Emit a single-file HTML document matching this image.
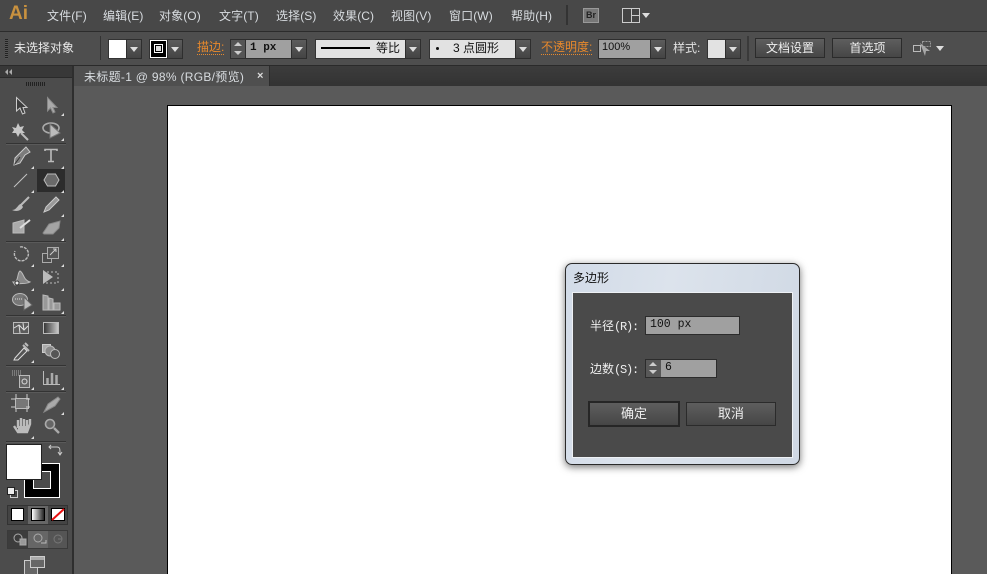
<!DOCTYPE html>
<html style="overflow:hidden;width:987px;height:574px"><head><meta charset="utf-8">
<style>
html,body{margin:0;padding:0}
body{width:987px;height:574px;overflow:hidden;position:relative;background:#5a5a5a;font-family:"Liberation Sans","WenQuanYi Zen Hei","Noto Sans CJK SC",sans-serif;font-size:12px;color:#e6e6e6}
#r{position:absolute;left:0;top:0;width:987px;height:574px;overflow:hidden}
.a{position:absolute;box-sizing:border-box}
.t{position:absolute;white-space:nowrap;line-height:14px;font-size:12px}
.m{color:#d8dce0;top:9px;letter-spacing:.1px}
.dd{position:absolute;box-sizing:border-box;height:20px;width:16px;border:1px solid #2e2e2e;background:linear-gradient(#5c5c5c,#444)}
.dd:after{content:"";position:absolute;left:3px;top:7px;border-left:4px solid transparent;border-right:4px solid transparent;border-top:5px solid #ddd}
.btn{position:absolute;box-sizing:border-box;border:1px solid #2b2b2b;background:linear-gradient(#5e5e5e,#464646);text-align:center;color:#eee;font-size:12px}
.sep{position:absolute;height:1px;background:#333;left:6px;width:60px;box-sizing:content-box;border-bottom:1px solid #5a5a5a}
.mono{font-family:"Liberation Mono","WenQuanYi Zen Hei",monospace;color:#111}
.l{font-family:"Liberation Mono",monospace;font-size:12px;letter-spacing:-1.2px}
</style></head><body><div id="r">

<!-- menu bar -->
<div class="a" style="left:0;top:0;width:987px;height:32px;background:#484848;border-bottom:1px solid #2c2c2c"></div>
<div class="t" style="left:9px;top:2px;font-size:19px;line-height:24px;font-weight:bold;color:#c8913f">Ai</div>
<div class="t m" style="left:47px">文件(F)</div>
<div class="t m" style="left:103px">编辑(E)</div>
<div class="t m" style="left:159px">对象(O)</div>
<div class="t m" style="left:219px">文字(T)</div>
<div class="t m" style="left:276px">选择(S)</div>
<div class="t m" style="left:333px">效果(C)</div>
<div class="t m" style="left:391px">视图(V)</div>
<div class="t m" style="left:449px">窗口(W)</div>
<div class="t m" style="left:511px">帮助(H)</div>
<div class="a" style="left:566px;top:5px;width:2px;height:20px;background:#333"></div>
<div class="a" style="left:583px;top:8px;width:16px;height:15px;background:#777;border:1px solid #999;color:#222;font-size:9px;font-weight:bold;line-height:13px;text-align:center">Br</div>
<div class="a" style="left:622px;top:8px;width:18px;height:15px;border:1px solid #ccc;background:#444"></div>
<div class="a" style="left:631px;top:8px;width:1px;height:15px;background:#ccc"></div>
<div class="a" style="left:631px;top:15px;width:9px;height:1px;background:#ccc"></div>
<div class="a" style="left:642px;top:13px;border-left:4px solid transparent;border-right:4px solid transparent;border-top:5px solid #ddd"></div>

<!-- control bar -->
<div class="a" style="left:0;top:32px;width:987px;height:34px;background:#4e4e4e;border-bottom:1px solid #2a2a2a"></div>
<div class="a" style="left:5px;top:39px;width:3px;height:20px;background:repeating-linear-gradient(#222 0 1px,#555 1px 2px)"></div>
<div class="t" style="left:14px;top:41px;color:#e8e8e8">未选择对象</div>
<div class="a" style="left:100px;top:36px;width:1px;height:24px;background:#333"></div>
<div class="a" style="left:108px;top:39px;width:19px;height:20px;background:#fff;border:1px solid #333"></div>
<div class="dd" style="left:126px;top:39px"></div>
<div class="a" style="left:149px;top:39px;width:19px;height:20px;background:#000;border:1px solid #fff;outline:1px solid #333;outline-offset:-1px"></div>
<div class="a" style="left:150px;top:40px;width:17px;height:18px;background:#000;border:1px solid #fff"></div>
<div class="a" style="left:154px;top:44px;width:9px;height:9px;border:1px solid #fff;background:#000"></div>
<div class="a" style="left:156px;top:46px;width:5px;height:5px;background:#ddd"></div>
<div class="dd" style="left:167px;top:39px"></div>
<div class="t" style="left:197px;top:41px;color:#e8892c;border-bottom:1px dotted #e8892c;line-height:13px">描边:</div>
<div class="a" style="left:230px;top:39px;width:16px;height:20px;background:#555;border:1px solid #2e2e2e"></div>
<div class="a" style="left:234px;top:42px;border-left:4px solid transparent;border-right:4px solid transparent;border-bottom:4px solid #ccc"></div>
<div class="a" style="left:234px;top:51px;border-left:4px solid transparent;border-right:4px solid transparent;border-top:4px solid #ccc"></div>
<div class="a" style="left:246px;top:39px;width:46px;height:20px;background:#a0a0a0;border-top:1px solid #2e2e2e;border-bottom:1px solid #2e2e2e"></div>
<div class="t mono" style="left:250px;top:41px;font-size:11px;font-weight:bold">1 px</div>
<div class="dd" style="left:291px;top:39px"></div>
<div class="a" style="left:315px;top:39px;width:91px;height:20px;background:#e2e2e2;border:1px solid #333"></div>
<div class="a" style="left:321px;top:47px;width:49px;height:2px;background:#000"></div>
<div class="t" style="left:376px;top:41px;color:#111">等比</div>
<div class="dd" style="left:405px;top:39px"></div>
<div class="a" style="left:429px;top:39px;width:87px;height:20px;background:#e2e2e2;border:1px solid #333"></div>
<div class="a" style="left:436px;top:47px;width:3px;height:3px;border-radius:50%;background:#111"></div>
<div class="t" style="left:453px;top:41px;color:#111">3</div>
<div class="t" style="left:463px;top:41px;color:#111">点圆形</div>
<div class="dd" style="left:515px;top:39px"></div>
<div class="t" style="left:541px;top:41px;color:#e8892c;border-bottom:1px dotted #e8892c;line-height:13px">不透明度:</div>
<div class="a" style="left:598px;top:39px;width:54px;height:20px;background:#a0a0a0;border:1px solid #2e2e2e"></div>
<div class="t" style="left:602px;top:40px;color:#111;font-size:11px">100%</div>
<div class="dd" style="left:650px;top:39px"></div>
<div class="t" style="left:673px;top:41px;color:#e0e0e0">样式:</div>
<div class="a" style="left:707px;top:39px;width:19px;height:20px;background:#e2e2e2;border:1px solid #333"></div>
<div class="dd" style="left:725px;top:39px"></div>
<div class="a" style="left:747px;top:36px;width:2px;height:25px;background:#3a3a3a"></div>
<div class="btn" style="left:755px;top:38px;width:70px;height:20px;line-height:18px">文档设置</div>
<div class="btn" style="left:832px;top:38px;width:70px;height:20px;line-height:18px;padding-left:1px">首选项</div>
<svg class="a" style="left:912px;top:40px" width="22" height="18" viewBox="0 0 22 18" fill="none"><rect x="1.5" y="5.5" width="7" height="6" stroke="#bbb"/><rect x="10.5" y="1.5" width="8" height="5" stroke="#999" stroke-dasharray="2 1"/><path d="M8 3 L18 11 L14 11 L13 16 Z" fill="#a8a8a8"/></svg>
<div class="a" style="left:936px;top:46px;border-left:4px solid transparent;border-right:4px solid transparent;border-top:5px solid #ddd"></div>

<!-- tab bar -->
<div class="a" style="left:73px;top:66px;width:914px;height:20px;background:linear-gradient(#3c3c3c,#333)"></div>
<div class="a" style="left:74px;top:66px;width:196px;height:20px;background:#4f4f4f;border-right:1px solid #2d2d2d"></div>
<div class="t" style="left:84px;top:70px;color:#d8dce0;letter-spacing:.3px">未标题-1 @ 98% (RGB/预览)</div>
<div class="t" style="left:257px;top:69px;color:#ddd;font-size:11px;font-weight:bold">×</div>

<!-- artboard -->
<div class="a" style="left:167px;top:105px;width:785px;height:480px;background:#fff;border:1px solid #000"></div>

<!-- toolbox -->
<div class="a" style="left:0;top:66px;width:72px;height:508px;background:#4c4c4c"></div>
<div class="a" style="left:72px;top:66px;width:2px;height:508px;background:#2e2e2e"></div>
<div class="a" style="left:0;top:66px;width:72px;height:12px;background:#383838;border-bottom:1px solid #2a2a2a"></div>
<div class="a" style="left:5px;top:69px;border-top:3px solid transparent;border-bottom:3px solid transparent;border-right:3px solid #aaa"></div>
<div class="a" style="left:9px;top:69px;border-top:3px solid transparent;border-bottom:3px solid transparent;border-right:3px solid #aaa"></div>
<div class="a" style="left:26px;top:82px;width:19px;height:4px;background:repeating-linear-gradient(90deg,#222 0 1px,#4c4c4c 1px 2px)"></div>

<div class="sep" style="top:143px"></div>
<div class="sep" style="top:241px"></div>
<div class="sep" style="top:315px"></div>
<div class="sep" style="top:365px"></div>
<div class="sep" style="top:391px"></div>
<div class="sep" style="top:441px"></div>

<svg class="a" style="left:0;top:90px" width="72" height="380" viewBox="0 90 72 380" fill="none" stroke="#bdbdbd">
<!-- selection -->
<path d="M16.5 97.5 V111 L20 108 L22.5 114 L25 113 L23 107.5 L27 107.5 Z" fill="#3c3c3c" stroke="#ccc"/>
<path d="M47.5 97.5 V111 L50.5 108 L53 113 L55 112 L53 107.5 L57 107.5 Z" fill="#aaa" stroke="#888"/>
<!-- wand -->
<path d="M12 127 L16 128 L18 123 L20 127 L24 126 L22 130 L25 133 L20 133 L18 137 L16 133 L12 133 L14 130 Z" fill="#c8c8c8" stroke="none"/>
<path d="M21 133 L28 140" stroke="#bbb" stroke-width="2"/>
<ellipse cx="51" cy="128" rx="8" ry="5" stroke-width="1.6" stroke="#aaa"/>
<path d="M50 124 V138 L60 133 Z" fill="#bbb" stroke="#777"/>
<!-- pen, type -->
<path d="M26 147 L30 152 L25 155 L20 163 L14 165 L15 158 L21 152 Z" fill="#7c7c7c" stroke="#ccc"/>
<path d="M14.5 164.5 L20 157" stroke="#333"/>
<path d="M45 151 V149.5 H57 V151 M51 149.5 V161.5 M48 161.5 H54" stroke="#bbb" stroke-width="1.6"/>
<!-- line, polygon -->
<path d="M14 187 L27 174" stroke="#c4c4c4"/>
<rect x="37" y="169" width="28" height="23" fill="#2c2c2c" stroke="none"/>
<path d="M44 180 L47.5 174 H55.5 L59 180 L55.5 186 H47.5 Z" fill="#6a6a6a" stroke="#bbb"/>
<!-- brush pencil -->
<path d="M29 197 L20 206" stroke="#bbb" stroke-width="2"/>
<path d="M12 210 C17 210 18 204 21 204 L23 207 C21 211 16 212 12 210Z" fill="#bbb" stroke="none"/>
<path d="M56 197 L59 200 L49 210 L44 212 L46 207 Z" fill="#999" stroke="#ccc"/>
<!-- blob, eraser -->
<path d="M13 223 L24 220 V233 H13 Z" fill="#aaa" stroke="#bbb"/>
<path d="M30 220 L20 228" stroke="#ddd" stroke-width="2"/>
<path d="M43 233 L49 224 L60 221 L59 228 L53 234 H44 Z" fill="#a4a4a4" stroke="#888"/>
<!-- rotate scale -->
<path d="M20 247 A7 7 0 1 1 15 251" stroke="#bbb" stroke-dasharray="3 1" stroke-width="1.4"/>
<rect x="42.5" y="253.5" width="9" height="9" stroke="#aaa"/><rect x="47.5" y="247.5" width="11" height="11" stroke="#aaa" fill="#555"/>
<path d="M50 255 L56 249 M53 249 H56 V252" stroke="#ccc"/>
<!-- warp, free transform -->
<path d="M13 282 C19 283 17 272 20 271 C24 273 23 280 30 282 C25 285 20 282 15 285 Z" fill="#888" stroke="#bbb"/>
<circle cx="17" cy="283" r="2" fill="#eee" stroke="#333"/>
<path d="M43 272 H58 V283 H43" stroke="#bbb" stroke-dasharray="2 2"/>
<path d="M43 270 L53 277 L43 284 Z" fill="#bbb" stroke="none"/>
<!-- shape builder, perspective -->
<ellipse cx="20" cy="299.5" rx="7.5" ry="6" fill="#777" stroke="#bbb"/>
<path d="M15 299 H22" stroke="#ddd" stroke-dasharray="1 1"/>
<path d="M24 297 V310 L32 305 Z" fill="#bbb" stroke="#666"/>
<path d="M43 295 L48 296 V310 H43 Z M49 298 L53 299 V310 H49 Z M54 303 H60 V310 H54Z" fill="#999" stroke="#bbb"/>
<!-- mesh, gradient -->
<rect x="13.5" y="322.5" width="15" height="11" fill="#5c5c5c" stroke="#bbb"/>
<path d="M14 328 L19 325 L24 330 L28 326 M19 325 L20 333 M24 330 L23 323" stroke="#ddd"/>
<defs><linearGradient id="g1"><stop offset="0" stop-color="#333"/><stop offset="1" stop-color="#ccc"/></linearGradient></defs>
<rect x="43.5" y="322.5" width="15" height="11" fill="url(#g1)" stroke="#bbb"/>
<!-- eyedropper, blend -->
<path d="M15 358 L24 348 L27 351 L18 360 L14 360 Z" fill="#555" stroke="#ddd"/>
<path d="M23 345 L29 351 M25 343 L28 346" stroke="#bbb" stroke-width="2"/>
<rect x="42.5" y="344.5" width="8" height="8" fill="#aaa" stroke="#ccc"/>
<circle cx="50" cy="351" r="5" fill="#888" stroke="#bbb"/>
<circle cx="55" cy="354" r="4.5" fill="#555" stroke="#bbb"/>
<!-- symbol spray, graph -->
<path d="M12 371 H21 M12 373 H21 M12 375 H21" stroke="#aaa" stroke-dasharray="1 1"/>
<rect x="19.5" y="375.5" width="10" height="12" fill="#666" stroke="#bbb"/>
<circle cx="24.5" cy="381.5" r="2.5" stroke="#ddd"/>
<path d="M43.5 371 V384.5 H60" stroke="#bbb"/>
<path d="M47.5 384 V378 M52 384 V373 M56.5 384 V375" stroke="#aaa" stroke-width="2.5"/>
<!-- artboard, slice -->
<rect x="15.5" y="398.5" width="13" height="10" fill="#777" stroke="#bbb"/>
<path d="M11 399 H32 M11 407 H32 M16 394 V412 M27 394 V412" stroke="#ccc" stroke-dasharray="4 11"/>
<path d="M44 412 L48 404 L58 397 L60 399 L55 406 Z" fill="#aaa" stroke="#888"/>
<!-- hand, zoom -->
<path d="M14 426 L18 432 H27 L30 424 V419 M18 428 V420 M21 428 V418 M24 428 V419 M27 428 V420" stroke="#bbb" stroke-width="2.4"/>
<path d="M18 426 H28 V432 H18 Z" fill="#bbb" stroke="none"/>
<circle cx="50" cy="424" r="4.5" fill="#666" stroke="#aaa" stroke-width="1.6"/>
<path d="M54 428 L59 433" stroke="#aaa" stroke-width="2.4"/>
</svg>

<!-- corner triangles -->
<svg class="a" style="left:0;top:90px" width="72" height="360" viewBox="0 90 72 360" fill="#ddd">
<path d="M34 166l-3 3h3z M64 166l-3 3h3z M34 190l-3 3h3z M64 190l-3 3h3z M64 113l-3 3h3z M64 138l-3 3h3z M64 214l-3 3h3z M64 238l-3 3h3z M34 264l-3 3h3z M64 264l-3 3h3z M34 288l-3 3h3z M64 288l-3 3h3z M34 311l-3 3h3z M64 311l-3 3h3z M34 360l-3 3h3z M34 387l-3 3h3z M64 387l-3 3h3z M64 412l-3 3h3z M34 436l-3 3h3z"/>
</svg>

<!-- fill stroke -->
<div class="a" style="left:24px;top:463px;width:36px;height:35px;background:#000;border:1px solid #fff"></div>
<div class="a" style="left:33px;top:471px;width:18px;height:18px;background:#4c4c4c;border:1px solid #fff"></div>
<div class="a" style="left:6px;top:444px;width:36px;height:36px;background:#fff;border:1px solid #222"></div>
<svg class="a" style="left:48px;top:443px" width="16" height="16" fill="none" stroke="#ccc"><path d="M3 2 L1 4 L3 6 M1 4 H9 C12 4 12 6 12 11 M10 9 L12 12 L14 9"/></svg>
<div class="a" style="left:10px;top:490px;width:8px;height:8px;background:#444;border:1px solid #ccc"></div>
<div class="a" style="left:7px;top:487px;width:8px;height:8px;background:#eee;border:1px solid #222"></div>

<!-- color modes -->
<div class="a" style="left:7px;top:505px;width:61px;height:20px;background:#444;border:1px solid #333"></div>
<div class="a" style="left:28px;top:506px;width:20px;height:18px;background:#666"></div>
<div class="a" style="left:11px;top:508px;width:13px;height:13px;background:#fff;border:1px solid #000"></div>
<div class="a" style="left:31px;top:508px;width:14px;height:13px;background:linear-gradient(90deg,#fff,#222);border:1px solid #000"></div>
<svg class="a" style="left:51px;top:508px" width="14" height="13"><rect x=".5" y=".5" width="13" height="12" fill="#fff" stroke="#000"/><path d="M1 12 L13 1" stroke="#e81010" stroke-width="2"/></svg>

<!-- draw modes -->
<div class="a" style="left:7px;top:530px;width:61px;height:19px;background:#555;border:1px solid #3a3a3a"></div>
<div class="a" style="left:8px;top:531px;width:20px;height:17px;background:#3c3c3c"></div>
<div class="a" style="left:28px;top:531px;width:20px;height:17px;background:#666"></div>
<svg class="a" style="left:7px;top:530px" width="61" height="19" fill="none" stroke="#aaa"><circle cx="11" cy="8" r="4"/><rect x="13" y="9" width="6" height="6" fill="#999"/><circle cx="31" cy="8" r="4"/><path d="M34 13 H39 V10" stroke="#bbb"/><circle cx="51" cy="9" r="4" stroke="#777"/><path d="M51 9 H55" stroke="#777"/></svg>

<!-- screen mode -->
<div class="a" style="left:24px;top:560px;width:14px;height:15px;border:1px solid #ccc;background:#666"></div>
<div class="a" style="left:30px;top:556px;width:15px;height:12px;border:1px solid #ccc;background:linear-gradient(#aaa 30%,#666 30%)"></div>

<!-- dialog -->
<div class="a" style="left:565px;top:263px;width:235px;height:202px;border-radius:7px;border:1px solid #2a2a2a;background:linear-gradient(100deg,#d2dbe8,#dce3ec 40%,#cfd8e4);box-shadow:0 2px 8px rgba(0,0,0,.55)"></div>
<div class="t" style="left:573px;top:271px;color:#111">多边形</div>
<div class="a" style="left:572px;top:292px;width:221px;height:166px;background:#4a4a4a;border:1px solid #eef1f5"></div>
<div class="t" style="left:590px;top:319px;color:#eee">半径<span class="l">(R):</span></div>
<div class="a" style="left:645px;top:316px;width:95px;height:19px;background:#a0a0a0;border:1px solid #2c2c2c"></div>
<div class="t mono" style="left:650px;top:318px;font-size:11.5px">100 px</div>
<div class="t" style="left:590px;top:362px;color:#eee">边数<span class="l">(S):</span></div>
<div class="a" style="left:645px;top:359px;width:72px;height:19px;background:#a0a0a0;border:1px solid #2c2c2c"></div>
<div class="a" style="left:646px;top:360px;width:15px;height:17px;background:#585858"></div>
<div class="a" style="left:649px;top:362px;border-left:4px solid transparent;border-right:4px solid transparent;border-bottom:4px solid #ccc"></div>
<div class="a" style="left:649px;top:370px;border-left:4px solid transparent;border-right:4px solid transparent;border-top:4px solid #ccc"></div>
<div class="t mono" style="left:665px;top:361px;font-size:11.5px">6</div>
<div class="btn" style="left:588px;top:401px;width:92px;height:26px;line-height:22px;border:2px solid #262626;font-size:13px">确定</div>
<div class="btn" style="left:686px;top:402px;width:90px;height:24px;line-height:22px;font-size:13px">取消</div>

</div></body></html>
